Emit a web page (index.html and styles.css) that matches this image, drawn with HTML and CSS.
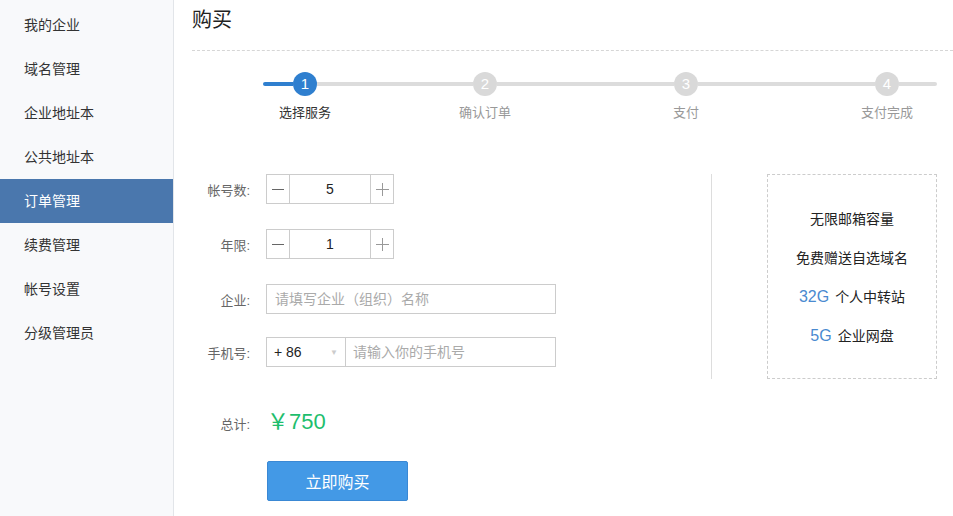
FILE: index.html
```html
<!DOCTYPE html>
<html lang="zh-CN">
<head>
<meta charset="UTF-8">
<title>购买</title>
<link rel="stylesheet" href="styles.css">
</head>
<body>

<div class="side">
  <a class="item">我的企业</a>
  <a class="item">域名管理</a>
  <a class="item">企业地址本</a>
  <a class="item">公共地址本</a>
  <a class="item active">订单管理</a>
  <a class="item">续费管理</a>
  <a class="item">帐号设置</a>
  <a class="item">分级管理员</a>
</div>

<div class="main">
  <h1 class="title">购买</h1>

  <div class="steps">
    <span class="seg seg-on seg-first"></span>
    <span class="dot dot-on">1</span>
    <span class="seg seg-a"></span>
    <span class="dot">2</span>
    <span class="seg seg-b"></span>
    <span class="dot">3</span>
    <span class="seg seg-b"></span>
    <span class="dot">4</span>
    <span class="seg seg-last"></span>

    <span class="step-name name-on c2">选择服务</span>
    <span class="step-name c4">确认订单</span>
    <span class="step-name c6">支付</span>
    <span class="step-name c8">支付完成</span>
  </div>

  <div class="content">
    <div class="form">
      <div class="row">
        <label class="lbl">帐号数:</label>
        <div class="stepper">
          <span class="btn"><svg width="12" height="12" viewBox="0 0 12 12"><path d="M0 6.5h12" stroke="#666" stroke-width="1"/></svg></span>
          <span class="num">5</span>
          <span class="btn"><svg width="13" height="13" viewBox="0 0 13 13"><path d="M0 6.5h13M6.5 0v13" stroke="#999" stroke-width="1"/></svg></span>
        </div>
      </div>
      <div class="row">
        <label class="lbl">年限:</label>
        <div class="stepper">
          <span class="btn"><svg width="12" height="12" viewBox="0 0 12 12"><path d="M0 6.5h12" stroke="#666" stroke-width="1"/></svg></span>
          <span class="num">1</span>
          <span class="btn"><svg width="13" height="13" viewBox="0 0 13 13"><path d="M0 6.5h13M6.5 0v13" stroke="#999" stroke-width="1"/></svg></span>
        </div>
      </div>
      <div class="row row-tight">
        <label class="lbl">企业:</label>
        <input class="field" type="text" placeholder="请填写企业（组织）名称">
      </div>
      <div class="row">
        <label class="lbl">手机号:</label>
        <div class="phone">
          <span class="code">+ 86<i class="arrow">▼</i></span>
          <input class="phone-in" type="text" placeholder="请输入你的手机号">
        </div>
      </div>
    </div>

    <div class="perks">
      <p>无限邮箱容量</p>
      <p>免费赠送自选域名</p>
      <p><b>32G</b>个人中转站</p>
      <p><b>5G</b>企业网盘</p>
    </div>
  </div>

  <div class="total">
    <span class="lbl">总计:</span>
    <span class="price">￥750</span>
  </div>

  <button class="buy">立即购买</button>
</div>

</body>
</html>
```

FILE: styles.css
```css
html, body { margin:0; height:100%; }
body { display:flex; font-family:"Liberation Sans", "Noto Sans CJK SC", sans-serif; color:#333; background:#fff; overflow:hidden; }

.side { width:174px; flex:none; background:#f8f9fb; border-right:1px solid #e2e5e9; padding-top:3px; box-sizing:border-box; }
.item { display:block; height:44px; line-height:44px; padding-left:24px; font-size:14px; color:#333; }
.item.active { background:#4a77ad; color:#fff; }

.main { flex:1; padding-left:18px; }
.title { margin:0; height:50px; line-height:40px; font-size:20px; font-weight:normal; color:#222; border-bottom:1px dashed #d6d6d6; }

.steps { display:grid; grid-template-columns:30px 24px 156px 24px 177px 24px 177px 24px 38px; grid-template-rows:24px auto; margin:21px 0 0 71px; width:674px; }
.seg { height:4px; align-self:center; background:#dcdcdc; }
.seg-on { background:#2f7fcf; }
.seg-first { border-radius:2px 0 0 2px; }
.seg-last { border-radius:0 2px 2px 0; }
.dot { width:24px; height:24px; border-radius:50%; background:#d9d9d9; color:#fff; font-size:15px; line-height:24px; text-align:center; }
.dot-on { background:#2f7fcf; }
.step-name { grid-row:2; margin:8px -38px 0; text-align:center; font-size:13px; line-height:18px; color:#999; white-space:nowrap; }
.name-on { color:#333; }
.c2 { grid-column:2; }
.c4 { grid-column:4; }
.c6 { grid-column:6; }
.c8 { grid-column:8; }

.content { display:flex; margin-top:52px; }
.form { width:520px; height:205px; border-right:1px solid #ddd; box-sizing:border-box; }
.row { display:flex; align-items:center; height:30px; margin-bottom:25px; }
.row-tight { margin-bottom:23px; }
.lbl { width:58px; margin-right:16px; text-align:right; font-size:13px; color:#666; }

.stepper { display:flex; height:30px; border:1px solid #ccc; box-sizing:border-box; }
.btn { width:22px; display:flex; align-items:center; justify-content:center; }
.num { width:80px; border-left:1px solid #ccc; border-right:1px solid #ccc; text-align:center; line-height:28px; font-size:14px; color:#222; }

.field { width:290px; height:30px; box-sizing:border-box; border:1px solid #ccc; padding:0 8px; font-size:14px; font-family:inherit; color:#333; outline:none; }
.field::placeholder, .phone-in::placeholder { color:#aaa; }

.phone { display:flex; width:290px; height:30px; border:1px solid #ccc; box-sizing:border-box; }
.code { width:79px; box-sizing:border-box; border-right:1px solid #ccc; display:flex; align-items:center; justify-content:space-between; padding:0 7px 0 7px; font-size:14px; color:#222; }
.arrow { font-style:normal; font-size:8px; color:#ccc; }
.phone-in { flex:1; border:none; padding:0 7px; font-size:14px; font-family:inherit; outline:none; min-width:0; }

.perks { width:170px; height:205px; margin-left:55px; border:1px dashed #ccc; box-sizing:border-box; padding-top:34px; text-align:center; }
.perks p { margin:0 0 19px; line-height:20px; font-size:14px; color:#222; }
.perks b { font-weight:normal; font-size:16px; color:#4a8ad0; margin-right:6px; }

.total { display:flex; align-items:baseline; margin-top:24px; height:30px; }
.total .lbl { margin-right:17px; }
.price { font-size:22px; color:#1ebe6d; }

.buy { margin:28px 0 0 75px; width:141px; height:40px; background:#4399e6; border:1px solid #3a88d4; border-radius:2px; color:#fff; font-size:16px; font-family:inherit; }
```
